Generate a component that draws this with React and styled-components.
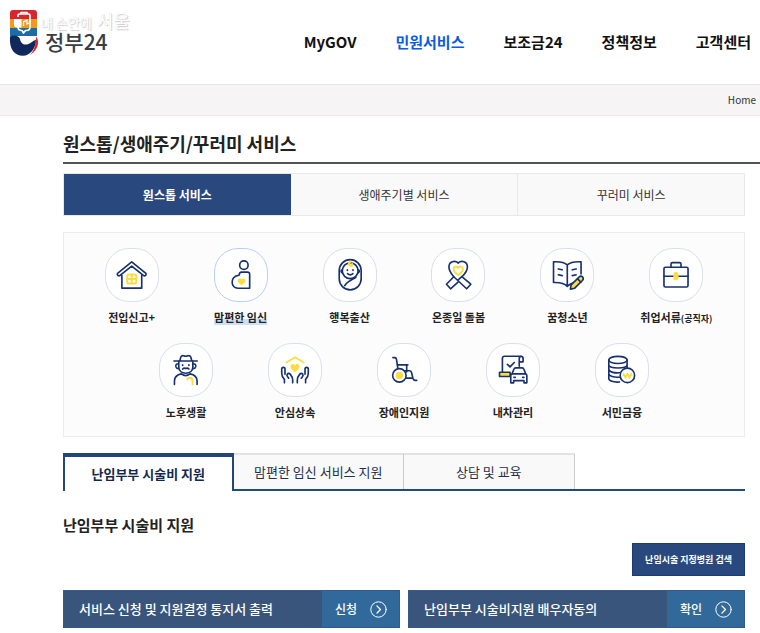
import React from "react";
import styled, { createGlobalStyle } from "styled-components";

const GlobalStyle = createGlobalStyle`
  * {
    box-sizing: border-box;
  }

  body {
    margin: 0;
    background: #fff;
    color: #222;
    font-family: "Noto Sans CJK KR", "Noto Sans", sans-serif;
  }

  button {
    font-family: inherit;
    cursor: pointer;
  }

  a {
    color: inherit;
    text-decoration: none;
  }

  ul {
    list-style: none;
    margin: 0;
    padding: 0;
  }
`;

const Header = styled.header`
  display: flex;
  justify-content: space-between;
  height: 85px;
  padding: 0 9px;
  border-bottom: 1px solid #e1e5ec;
`;

const Logo = styled.a`
  position: relative;
  display: flex;
  align-items: flex-start;
  gap: 6px;
  padding-top: 10px;
`;

const LogoText = styled.span`
  margin-top: 20px;
  font-size: 21px;
  line-height: 22px;
  font-weight: 500;
  color: #3a3e42;
`;

/* broadcaster mark laid over the logo */
const Watermark = styled.span`
  position: absolute;
  top: 10px;
  left: 32px;
  display: flex;
  align-items: baseline;
  gap: 5px;
  white-space: nowrap;
  font-size: 13px;
  line-height: 20px;
  color: #fff;
  text-shadow: 1px 1px 1px #ccc, 0 0 1px #ddd;
`;

const WatermarkCity = styled.span`
  font-size: 18px;
`;

const Nav = styled.nav`
  display: flex;
  align-items: center;
  gap: 39px;
`;

const NavLink = styled.a`
  font-size: 15px;
  line-height: 22px;
  font-weight: bold;
  white-space: nowrap;
  color: ${(props) => (props.$active ? "#0b5be0" : "#111")};
`;

const Breadcrumb = styled.div`
  display: flex;
  justify-content: flex-end;
  align-items: center;
  height: 31px;
  padding-right: 4px;
  background: #f6f4f5;
  border-bottom: 1px solid #ebebeb;
  font-size: 10px;
  line-height: 16px;
  color: #333;
`;

const Main = styled.main`
  padding-left: 63px;
`;

const PageTitle = styled.h1`
  margin: 0 0 9px;
  padding: 13px 0 5px;
  border-bottom: 2px solid #505654;
  font-size: 18px;
  line-height: 28px;
  font-weight: bold;
`;

const Content = styled.div`
  margin-right: 15px;
`;

const Tabs = styled.div`
  display: grid;
  grid-template-columns: repeat(3, 1fr);
  margin-bottom: 16px;
  border: 1px solid #e8e8e8;
`;

const Tab = styled.button`
  height: 41px;
  padding: 0;
  border: 0;
  border-left: ${(props) => (props.$divider ? "1px solid #e8e8e8" : "0")};
  background: ${(props) => (props.$active ? "#29497e" : "#f9f9f9")};
  color: ${(props) => (props.$active ? "#fff" : "#333")};
  font-size: 12px;
  line-height: 18px;
  font-weight: ${(props) => (props.$active ? "bold" : "normal")};
`;

const ServiceList = styled.ul`
  display: flex;
  flex-wrap: wrap;
  justify-content: center;
  row-gap: 16px;
  margin-bottom: 16px;
  padding: 15px 13px 16px;
  border: 1px solid #ebebeb;
  background: #fcfcfc;
`;

const ServiceItem = styled.li`
  flex: 0 0 16.66%;
`;

const ServiceLink = styled.a`
  display: flex;
  flex-direction: column;
  align-items: center;
  gap: 7px;
`;

const IconCircle = styled.span`
  width: 54px;
  height: 54px;
  border: 1px solid ${(props) => (props.$active ? "#b5d0fa" : "#d9dfeb")};
  border-radius: 24px;
  background: #fff;

  svg {
    display: block;
    width: 100%;
    height: 100%;
  }
`;

const ServiceLabel = styled.span`
  font-size: 11px;
  line-height: 16px;
  font-weight: bold;
  white-space: nowrap;
  color: #222;
  background: ${(props) =>
    props.$active
      ? "linear-gradient(transparent 65%, #cde0fa 65%)"
      : "transparent"};

  small {
    font-size: 9px;
  }
`;

const SubTabs = styled.div`
  display: flex;
  margin-bottom: 23px;
  /* line under the tabs, the active one covers it */
  background: linear-gradient(#234a7a, #234a7a) bottom / 100% 2px no-repeat;
`;

const SubTab = styled.button`
  flex: 0 0 25%;
  height: 36px;
  padding: 0;
  border: 0;
  border-top: 2px solid #e2e2e2;
  border-right: 1px solid #ccc;
  background: #f9f9f9;
  color: #22304d;
  font-size: 13px;
  line-height: 20px;
`;

const ActiveSubTab = styled(SubTab)`
  height: 38px;
  border: 2px solid #24457c;
  border-top-width: 4px;
  border-bottom: 0;
  background: #fff;
  color: #14284f;
  font-weight: bold;
`;

const SectionTitle = styled.h2`
  margin: 0 0 7px;
  font-size: 15px;
  line-height: 22px;
  font-weight: bold;
`;

const SearchRow = styled.div`
  display: flex;
  justify-content: flex-end;
  margin-bottom: 14px;
`;

const SearchButton = styled.button`
  height: 33px;
  padding: 0 12px;
  border: 1px solid #1c3c70;
  background: #29497e;
  color: #fff;
  font-size: 9px;
  line-height: 14px;
  font-weight: bold;
`;

const Actions = styled.div`
  display: grid;
  grid-template-columns: 1fr 1fr;
  gap: 8px;
`;

const ActionButton = styled.button`
  display: flex;
  height: 38px;
  padding: 0;
  border: 1px solid #35598a;
  background: #3a557c;
  color: #fff;
  font-size: 13px;
  line-height: 20px;
  font-weight: 500;
  text-align: left;
`;

const ActionText = styled.span`
  flex: 1;
  align-self: center;
  padding-left: 15px;
`;

const ActionSide = styled.span`
  display: flex;
  align-items: center;
  align-self: stretch;
  justify-content: space-between;
  width: 77px;
  padding: 0 12px 0 13px;
  background: #316a9a;
  font-size: 12px;
`;

const Line = styled.g`
  fill: none;
  stroke: ${(props) => props.$color || "#17306f"};
  stroke-width: ${(props) => props.$width || 1.7};
  stroke-linecap: round;
  stroke-linejoin: round;
`;

const YELLOW = "#fddc3f";

function Heart({ x, y, size, ...rest }) {
  return (
    <path
      transform={`translate(${x} ${y}) scale(${size / 10})`}
      d="M0 4.5C-2 3-5 .8-5-1.7-5-4.6-1.5-5.3 0-2.8 1.5-5.3 5-4.6 5-1.7 5 .8 2 3 0 4.5Z"
      {...rest}
    />
  );
}

function HouseIcon() {
  return (
    <svg viewBox="0 0 54 54">
      <Line>
        <path d="M26.7 13.3 12 25.2q-.8 1.4.4 2.4 1.2.6 2.2-.2L26.7 17.7l12.1 9.7q1 .8 2.2.2 1.2-1 .4-2.4Z" />
        <path d="M16.5 27.5v13.2h20.6V27.5" />
      </Line>
      <Line $color={YELLOW} $width={2}>
        <rect x="22" y="26.5" width="9.4" height="9.4" rx="2" />
        <path d="M26.7 26.5v9.4M22 31.2h9.4" />
      </Line>
    </svg>
  );
}

function PregnancyIcon() {
  return (
    <svg viewBox="0 0 54 54">
      <Line>
        <circle cx="30" cy="16.8" r="4.4" />
        <path d="M27.6 24h6.2q2.2 0 2.2 2.2v14.6H24c-4 0-6.2-3-6.2-6.5 0-4 2.8-6.5 7.2-7.1.2-2 .8-3.2 2.600-3.2Z" />
      </Line>
      <Heart x={27.6} y={34} size={8} fill={YELLOW} />
    </svg>
  );
}

function BabyIcon() {
  return (
    <svg viewBox="0 0 54 54">
      <Line>
        <rect x="15.8" y="11" width="22.8" height="31.4" rx="11.4" />
        <circle cx="27.2" cy="22.6" r="8.2" />
        <path d="M19 21.5q-2.500 1-.3 3.2M35.400 21.500q2.500 1 .3 3.2M33 29.500c-5 2.500-10 5-11.500 8.500" />
        <path d="M24.300 21.600v.6M30.100 21.600v.6M24.400 25.600q2.800 2.400 5.600 0" />
      </Line>
      <Line $color={YELLOW} $width={2.400}>
        <path d="M27.200 13.500q-2 1.500-.5 3.500 2.500 1.500 2.500-1.200" />
      </Line>
    </svg>
  );
}

function RibbonIcon() {
  return (
    <svg viewBox="0 0 54 54">
      <Line>
        <path d="M27.2 14.500c-3.500-3-9.400-1.500-9.600 4-.2 4.500 2.800 7.500 5 10.300L36 41.300l4.300-4.700L31 28.800" />
        <path d="M27.2 14.500c3.500-3 9.400-1.500 9.600 4 .2 4.500-2.800 7.500-5.800 10.300L27.200 32M22.600 28.800 15 36.600l4.300 4.700L27 34.500" />
      </Line>
      <Line $color={YELLOW} $width={2}>
        <path d="M27.2 27c-2.500-1.800-4.900-3.500-4.900-6 0-3 3.400-3.700 4.900-1.200 1.500-2.500 4.900-1.800 4.900 1.200 0 2.500-2.400 4.200-4.900 6Z" />
      </Line>
    </svg>
  );
}

function BookIcon() {
  return (
    <svg viewBox="0 0 54 54">
      <Line>
        <path d="M27.3 16.5c-3-2.800-8-3.500-14.300-3.200v21.500c6-.3 11 .5 14.300 4 2-2 4-3 6-3.500M27.300 16.500c3-2.800 8-3.500 14.300-3.200V26M27.300 16.500v22" />
        <path d="M18 20.700l4 .9M18 26.700l4 .9M36.500 20.700l-4 .9M36.500 26.700l-4 .9" />
        <path
          d="M39.5 29.2q2-1.800 3.700-.2 1.500 1.700-.2 3.700l-8 8-4.500 1 .8-4.500Z"
          fill={YELLOW}
        />
        <path d="M38 31l3.400 3.400" />
      </Line>
    </svg>
  );
}

function BriefcaseIcon() {
  return (
    <svg viewBox="0 0 54 54">
      <Line>
        <rect x="14.5" y="19" width="25" height="20.5" rx="1.5" />
        <path d="M21.8 19v-3.300q0-1.500 1.500-1.500h7.400q1.500 0 1.500 1.500V19M14.500 28.300h25" />
      </Line>
      <rect x="24.2" y="24" width="5.4" height="8.5" rx="2.7" fill={YELLOW} />
    </svg>
  );
}

function SeniorIcon() {
  return (
    <svg viewBox="0 0 54 54">
      <Line>
        <path d="M14.5 17.700h24.200M20.600 17.500l1-4q1-2 3-1.300 2.200 1 4.400 0 2-.7 3 1.300l1 4" />
        <path d="M19.500 18v6c0 8.500 14.600 8.500 14.600 0v-6M19 20.500q-3 .2-2.500 3 .5 2.300 3 2M34.600 20.500q3 .2 2.500 3-.5 2.300-3 2" />
        <path d="M23.500 21.700v.5M30 21.700v.5M23.600 26q1.500-1.700 3.200-.6 1.700-1.100 3.200.6" />
        <path d="M15 42v-3.500c0-4.200 3-6.800 7.200-7.500q4.500 3.500 9 0c4.200.7 7.300 3.300 7.300 7.500V42" />
      </Line>
      <Line $color={YELLOW} $width={2}>
        <path d="M28.300 37q.3-2 2.700-2t2.700 2.500V42" />
      </Line>
    </svg>
  );
}

function HandsIcon() {
  return (
    <svg viewBox="0 0 54 54">
      <Line>
        <path d="M16 40.300v-3.500q-2.800-2.800-2.800-6.500v-4q0-2 1.700-2t1.700 2v5.200M24.600 40.300v-3c0-3-1.200-4.300-2.600-6q-1.500-1.600-3 0-.9 1.200.3 2.700l1.200 1.500" />
        <path d="M38 40.300v-3.500q2.800-2.800 2.800-6.500v-4q0-2-1.700-2t-1.700 2v5.200M29.400 40.300v-3c0-3 1.200-4.300 2.600-6q1.500-1.600 3 0 .9 1.200-.3 2.700l-1.200 1.500" />
      </Line>
      <Line $color={YELLOW} $width={1.8}>
        <path d="M18 19.300l9-5.600 9 5.600" />
      </Line>
      <Heart x={27} y={25} size={9.5} fill={YELLOW} />
    </svg>
  );
}

function WheelchairIcon() {
  return (
    <svg viewBox="0 0 54 54">
      <Line>
        <path d="M15.5 14.200h2q1.300 0 1.600 1.300l1.500 9.500M19.800 21.700H31M29.800 21.700v7.300M24 27.800h8.500q1.800 0 2.300 1.800l1.500 6q.6 2 2 2.200h1.900M28 35.500h8" />
        <circle cx="22.2" cy="32.6" r="7" fill="#fff" />
      </Line>
      <circle cx="22.2" cy="32.6" r="3.8" fill={YELLOW} />
    </svg>
  );
}

function CarIcon() {
  return (
    <svg viewBox="0 0 54 54">
      <Line>
        <path d="M16 29V15q0-2.300 2.300-2.300H35q2.500 0 2.500 2.500v3.300h-4v-3.300q0-2.300 2-2.300M33.500 18v5" />
        <path d="M13 29.300h11v4.400H13Z" fill={YELLOW} />
        <path d="M21.200 21.200l2.700 2.600 4.400-4.600" />
        <path
          d="M26 31l2-5q.4-1.200 1.800-1.200h6.600q1.400 0 1.800 1.200l2 5q1.200.7 1.200 2v7.300h-3v-2.300H27.700v2.300h-3V33q0-1.300 1.300-2Z"
          fill="#fff"
        />
        <path d="M26 31h14.200M28 34.700h1.300M37 34.700h1.300" />
      </Line>
    </svg>
  );
}

function CoinsIcon() {
  return (
    <svg viewBox="0 0 54 54">
      <Line>
        <ellipse cx="22.8" cy="16.5" rx="9.5" ry="3.7" />
        <path d="M13.3 16.500v19.300c0 2.500 5 4.200 11 3.600M32.300 16.500V25M13.300 21.500c0 4.500 19 4.500 19 0M13.300 26.300c0 3 7 4.300 12.500 3.300M13.300 31c0 2.500 5.500 3.900 11 3.500" />
        <circle cx="32.6" cy="32.6" r="7.5" fill="#fff" />
      </Line>
      <Line $color={YELLOW} $width={1.6}>
        <path d="M28.5 30.500l2 4.700 2.100-4.700 2.100 4.700 2-4.700M28 32.800h9.200" />
      </Line>
    </svg>
  );
}

function LogoMark() {
  return (
    <svg width="30" height="46" viewBox="0 0 30 46" aria-hidden="true">
      <path d="M1 9V3q0-3 3-3h21q3 0 3 3v6Z" fill="#d8262f" />
      <path d="M1 9h27v9H1Z" fill="#f29a1f" />
      <path d="M1 18h27v8H1Z" fill="#1c6ca5" />
      <path
        d="M1 26.500c4-2 9-1 10 2.500.6 3.500 3 6 6.500 5.500 4.500-.6 6-4 9.500-4.500-.5 9-6 15.700-13 15.700C5.500 45.700 0 39.500 1 26.500Z"
        fill="#10295c"
      />
      <path
        d="M27.500 26.500c3 5 2 13.500-6.500 18.500 3.500-4 5.300-8.500 5.500-13.500Z"
        fill="#d8262f"
      />
      <g fill="none" stroke="#fff" strokeWidth="1.7" strokeLinejoin="round">
        <path d="M9 7V5.500q0-1.500 1.500-1.500h9q1.500 0 1.500 1.500V17q0 3.500-3.500 3.500h-1l-2 2.500-1.500-2.500q-4 0-4-3.500" />
        <path d="M12 4V2.500h6V4" />
      </g>
      <path d="M5 9h7.500v8.500H8q-3 0-3-3Z" fill="#fff" />
      <path
        d="M14.500 16v-4l3.500-2v4l2-1"
        fill="none"
        stroke="#fff"
        strokeWidth="1.3"
      />
    </svg>
  );
}

function ArrowCircle() {
  return (
    <svg width="17" height="17" viewBox="0 0 17 17" aria-hidden="true">
      <g fill="none" stroke="#fff" strokeLinecap="round" strokeLinejoin="round">
        <circle cx="8.5" cy="8.5" r="7.7" />
        <path d="M7 5l3.500 3.500L7 12" strokeWidth="1.3" />
      </g>
    </svg>
  );
}

const menu = ["MyGOV", "민원서비스", "보조금24", "정책정보", "고객센터"];

const tabs = ["원스톱 서비스", "생애주기별 서비스", "꾸러미 서비스"];

const services = [
  { label: "전입신고+", Icon: HouseIcon },
  { label: "맘편한 임신", Icon: PregnancyIcon, active: true },
  { label: "행복출산", Icon: BabyIcon },
  { label: "온종일 돌봄", Icon: RibbonIcon },
  { label: "꿈청소년", Icon: BookIcon },
  { label: "취업서류", note: "(공직자)", Icon: BriefcaseIcon },
  { label: "노후생활", Icon: SeniorIcon },
  { label: "안심상속", Icon: HandsIcon },
  { label: "장애인지원", Icon: WheelchairIcon },
  { label: "내차관리", Icon: CarIcon },
  { label: "서민금융", Icon: CoinsIcon },
];

const actions = [
  { text: "서비스 신청 및 지원결정 통지서 출력", side: "신청" },
  { text: "난임부부 시술비지원 배우자동의", side: "확인" },
];

function App() {
  return (
    <div>
      <GlobalStyle />
      <Header>
        <Logo href="#">
          <LogoMark />
          <LogoText>정부24</LogoText>
          <Watermark>
            내 손안에 <WatermarkCity>서울</WatermarkCity>
          </Watermark>
        </Logo>
        <Nav>
          {menu.map((item) => (
            <NavLink href="#" key={item} $active={item === "민원서비스"}>
              {item}
            </NavLink>
          ))}
        </Nav>
      </Header>
      <Breadcrumb>
        <a href="#">Home</a>
      </Breadcrumb>

      <Main>
        <PageTitle>원스톱/생애주기/꾸러미 서비스</PageTitle>
        <Content>
          <Tabs>
            {tabs.map((item, index) => (
              <Tab key={item} $active={index === 0} $divider={index === 2}>
                {item}
              </Tab>
            ))}
          </Tabs>

          <ServiceList>
            {services.map(({ label, note, Icon, active }) => (
              <ServiceItem key={label}>
                <ServiceLink href="#">
                  <IconCircle $active={active}>
                    <Icon />
                  </IconCircle>
                  <ServiceLabel $active={active}>
                    {label}
                    {note && <small>{note}</small>}
                  </ServiceLabel>
                </ServiceLink>
              </ServiceItem>
            ))}
          </ServiceList>

          <SubTabs>
            <ActiveSubTab>난임부부 시술비 지원</ActiveSubTab>
            <SubTab>맘편한 임신 서비스 지원</SubTab>
            <SubTab>상담 및 교육</SubTab>
          </SubTabs>

          <SectionTitle>난임부부 시술비 지원</SectionTitle>
          <SearchRow>
            <SearchButton>난임시술 지정병원 검색</SearchButton>
          </SearchRow>

          <Actions>
            {actions.map((item) => (
              <ActionButton key={item.side}>
                <ActionText>{item.text}</ActionText>
                <ActionSide>
                  {item.side}
                  <ArrowCircle />
                </ActionSide>
              </ActionButton>
            ))}
          </Actions>
        </Content>
      </Main>
    </div>
  );
}

export default App;
